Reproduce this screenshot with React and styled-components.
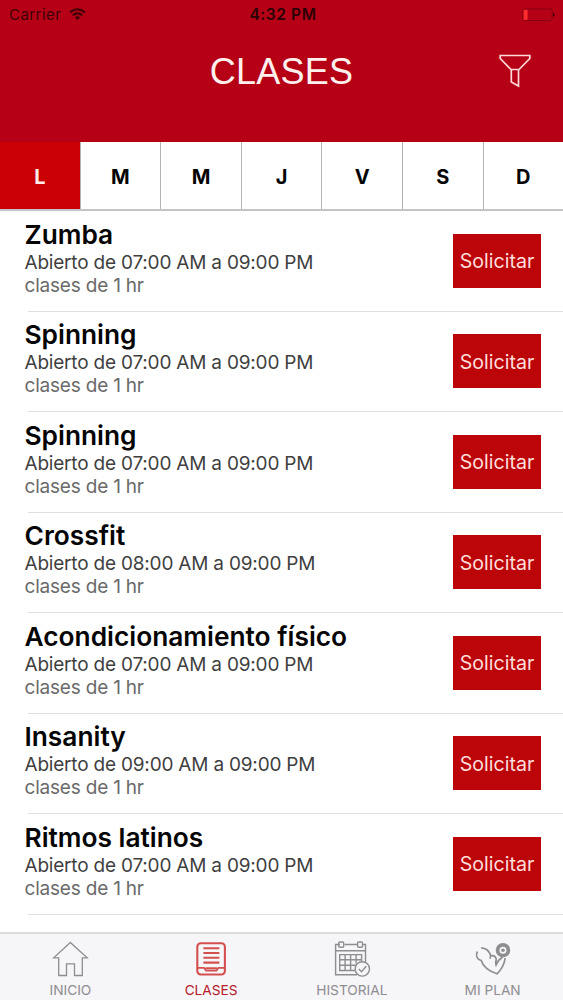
import React, { useState } from 'react';
import styled, { createGlobalStyle } from 'styled-components';

const GlobalStyle = createGlobalStyle`
    * {
        box-sizing: border-box;
    }

    body {
        margin: 0;
        background-color: #fff;
        font-family: Inter, 'Liberation Sans', sans-serif;
    }
`;

const Screen = styled.div`
    width: 563px;
    height: 1000px;
    display: flex;
    flex-direction: column;
    overflow: hidden;
    background-color: #fff;
`;

const Header = styled.header`
    height: 142px;
    flex: none;
    background-color: #b50016;
`;

const StatusBar = styled.div`
    height: 29px;
    padding: 0 8px 0 9px;
    display: grid;
    grid-template-columns: 1fr auto 1fr;
    align-items: center;
    color: #3d0208;
    font-size: 15px;
    line-height: 29px;
`;

const Carrier = styled.div`
    display: flex;
    align-items: center;
    gap: 8px;
    letter-spacing: 0.45px;
`;

const Clock = styled.div`
    padding-left: 2px;
    font-size: 15.5px;
    font-weight: 600;
    letter-spacing: 0.6px;
    color: #2a0105;
`;

const Battery = styled.svg`
    justify-self: end;
`;

const TitleRow = styled.div`
    height: 84px;
    padding: 0 32px;
    display: grid;
    grid-template-columns: 1fr auto 1fr;
    align-items: center;
`;

const Title = styled.h1`
    grid-column: 2;
    margin: 0;
    padding-top: 2px;
    color: #fff0ee;
    font-family: 'Liberation Sans', sans-serif;
    font-size: 36px;
    font-weight: 400;
    line-height: 40px;
    letter-spacing: 0.2px;
`;

const FilterButton = styled.button`
    justify-self: end;
    padding: 0;
    border: 0;
    background: none;
    display: flex;
`;

const Days = styled.nav`
    height: 69px;
    flex: none;
    display: grid;
    grid-template-columns: 79.6px repeat(5, 80.6px) 1fr;
    border-bottom: 2px solid #c4c4c4;
`;

const Day = styled.button`
    padding: 2px 0 0;
    border: 0;
    border-left: ${({ $first }) => ($first ? '0' : '1px solid #b4b4b4')};
    background-color: ${({ $active }) => ($active ? '#cb0005' : '#fff')};
    color: ${({ $active }) => ($active ? '#ffeceb' : '#050505')};
    font-family: inherit;
    font-size: 20px;
    font-weight: 700;
`;

const List = styled.ul`
    flex: 1;
    margin: 0;
    padding: 0;
    list-style: none;
`;

const Item = styled.li`
    height: 100.5px;
    margin-left: 28px;
    padding-right: 22px;
    display: flex;
    justify-content: space-between;
    align-items: center;
    border-bottom: 1px solid #dfdfe1;
`;

const Info = styled.div`
    margin: 0 0 5px -3.5px;
`;

const Name = styled.h2`
    margin: 0;
    color: #050505;
    font-size: 26.3px;
    font-weight: 600;
    line-height: 30px;
`;

const Schedule = styled.p`
    margin: 0;
    color: #3f3f3f;
    font-size: 19px;
    line-height: 25px;
    letter-spacing: -0.2px;
`;

const Duration = styled.p`
    margin: 0;
    color: #6a6a6a;
    font-size: 19px;
    line-height: 22px;
    letter-spacing: -0.2px;
`;

const RequestButton = styled.button`
    width: 88px;
    height: 54px;
    padding: 1px 0 0;
    border: 0;
    background-color: #bc0508;
    color: #ffdedb;
    font-family: inherit;
    font-size: 19.6px;
    white-space: nowrap;
`;

const TabBar = styled.footer`
    height: 68px;
    flex: none;
    display: grid;
    grid-template-columns: repeat(4, 1fr);
    border-top: 2px solid #dcdbde;
    background-color: #f6f5f8;
`;

const Tab = styled.button`
    padding: 6px 0 0;
    border: 0;
    background: none;
    display: flex;
    flex-direction: column;
    align-items: center;
    gap: 2px;
    color: ${({ $active }) => ($active ? '#b5202b' : '#8e8d90')};
    font-family: inherit;
    font-size: 13.7px;
    line-height: 17px;
`;

const TabIcon = styled.svg`
    width: 40px;
    height: 40px;
    flex: none;
    fill: none;
    stroke: ${({ $active }) => ($active ? '#d4504f' : '#8e8d90')};
    stroke-width: 1.4;
`;

const WifiIcon = () => (
    <svg width="17" height="13" viewBox="0 0 17 13" fill="none" stroke="#3d0208" strokeWidth="2.1">
        <path d="M1 4.4Q8.5-1.9 16 4.4" />
        <path d="M3.7 7.3Q8.5 3.3 13.3 7.3" />
        <path d="M5.8 9.3Q8.5 7 11.2 9.3L8.5 12Z" fill="#3d0208" stroke="none" />
    </svg>
);

const FilterIcon = () => (
    <svg width="32" height="34" viewBox="0 0 32 34" fill="none" stroke="#ffd9d7" strokeWidth="1.7">
        <path d="M1.2 1.5H30.8V4.5L20 15.5H12L1.2 4.5Z" />
        <path d="M12.3 15.5V28L19.5 32V15.5" />
    </svg>
);

const icons = {
    inicio: <path d="M20.3 2.5L3.7 17.8H8.7V35.5H16.5V23.8H24.5V35.5H32.3V17.8H37.2Z" strokeWidth="1.3" />,
    clases: (
        <>
            <rect x="6.3" y="3.3" width="27.6" height="31.2" rx="3.5" strokeWidth="2.1" />
            <path d="M12.4 8.2H28.4M12.4 13H28.4M12.4 17.8H28.4M12.4 22.6H28.4" strokeWidth="2.1" />
            <path d="M6.5 27.8H13L15 30.5H25.5L27.5 27.8H34M14.5 28.1H26" strokeWidth="1.8" />
        </>
    ),
    historial: (
        <>
            <path d="M8 4.5H3.6V34.7H25M12.5 4.5H26M30.8 4.5H33.5V22M3.6 10.7H33.5" />
            <rect x="6.8" y="2" width="4.9" height="5.2" rx="1" />
            <rect x="25.6" y="2" width="4.9" height="5.2" rx="1" />
            <path d="M23.5 30.5H7.7V14.6H29.6V21.5M7.7 19.8H29.6M7.7 25.2H24.5M13.1 14.6V30.5M18.6 14.6V30.5M24.1 14.6V23.5" />
            <circle cx="30.3" cy="28.9" r="7.2" />
            <path d="M26.8 29L29.5 31.8L34.2 26.3" />
        </>
    ),
    // flexed arm holding a weight plate
    plan: (
        <>
            <path d="M4.4 11.5C2.2 15.5 4.2 19.8 8.2 20.5C10.2 27 15 30.8 24 33.8C28 30 31.2 25 32.2 18" strokeWidth="1.7" />
            <path d="M8.2 7.8C13.5 8 16.4 11 17.8 15.8C20.6 15.2 22.6 16.5 23.4 19.4M17.8 15.5L17 18.6M29.3 17.2C26.3 19.2 24.2 21.5 23 25C22.3 23 22.5 21.3 23.4 19.4" strokeWidth="1.7" />
            <circle cx="30" cy="10.2" r="5.4" strokeWidth="3.8" />
            <circle cx="30" cy="10.2" r="1.8" fill="#8e8d90" stroke="none" />
        </>
    ),
};

const days = ['L', 'M', 'M', 'J', 'V', 'S', 'D'];

const classes = [
    { id: 1, name: 'Zumba', from: '07:00 AM' },
    { id: 2, name: 'Spinning', from: '07:00 AM' },
    { id: 3, name: 'Spinning', from: '07:00 AM' },
    { id: 4, name: 'Crossfit', from: '08:00 AM' },
    { id: 5, name: 'Acondicionamiento físico', from: '07:00 AM' },
    { id: 6, name: 'Insanity', from: '09:00 AM' },
    { id: 7, name: 'Ritmos latinos', from: '07:00 AM' },
];

const tabs = [
    { id: 'inicio', label: 'INICIO' },
    { id: 'clases', label: 'CLASES' },
    { id: 'historial', label: 'HISTORIAL' },
    { id: 'plan', label: 'MI PLAN' },
];

const App = () => {
    const [day, setDay] = useState(0);
    const [tab, setTab] = useState('clases');

    return (
        <Screen>
            <GlobalStyle />
            <Header>
                <StatusBar>
                    <Carrier>Carrier <WifiIcon /></Carrier>
                    <Clock>4:32 PM</Clock>
                    <Battery width="33" height="14" viewBox="0 0 33 14">
                        <rect x="0.8" y="1" width="29.4" height="11.5" rx="2" fill="none" stroke="#850010" />
                        <rect x="1.6" y="1.8" width="4" height="10" fill="#ff2d2d" />
                        <path d="M31 4.5Q34 6.8 31 9Z" fill="#3d0208" />
                    </Battery>
                </StatusBar>
                <TitleRow>
                    <Title>CLASES</Title>
                    <FilterButton aria-label="Filtrar"><FilterIcon /></FilterButton>
                </TitleRow>
            </Header>

            <Days>
                {days.map((d, i) => (
                    <Day key={i} $first={i === 0} $active={i === day} onClick={() => setDay(i)}>{d}</Day>
                ))}
            </Days>

            <List>
                {classes.map((c) => (
                    <Item key={c.id}>
                        <Info>
                            <Name>{c.name}</Name>
                            <Schedule>Abierto de {c.from} a 09:00 PM</Schedule>
                            <Duration>clases de 1 hr</Duration>
                        </Info>
                        <RequestButton>Solicitar</RequestButton>
                    </Item>
                ))}
            </List>

            <TabBar>
                {tabs.map((t) => (
                    <Tab key={t.id} $active={t.id === tab} onClick={() => setTab(t.id)}>
                        <TabIcon viewBox="0 0 40 40" $active={t.id === tab}>{icons[t.id]}</TabIcon>
                        {t.label}
                    </Tab>
                ))}
            </TabBar>
        </Screen>
    );
};

export default App;
